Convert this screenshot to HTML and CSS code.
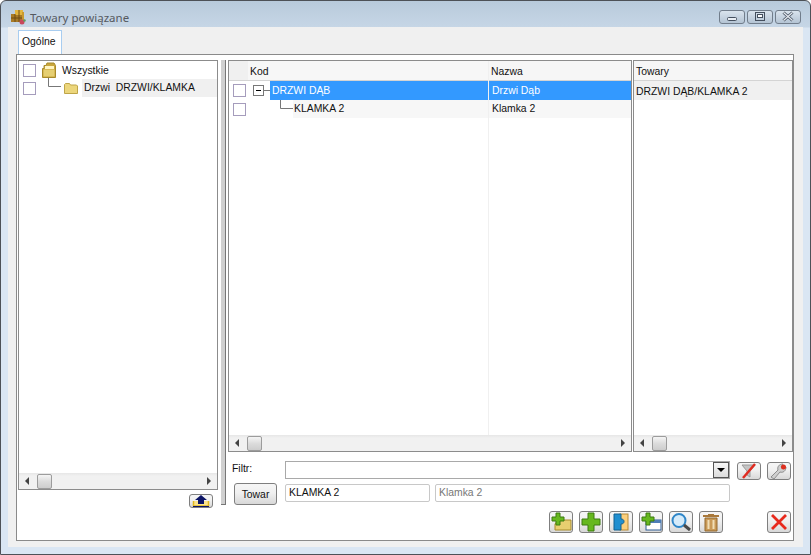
FILE: index.html
```html
<!DOCTYPE html>
<html lang="pl">
<head>
    <meta charset="UTF-8">
    <title>Towary powiązane</title>
    <link rel="stylesheet" href="styles.css">
</head>
<body>
<div class="window">
    <div class="titlebar">
        <svg class="app-icon" width="15" height="15" viewBox="0 0 15 15">
            <rect x="0" y="4" width="11" height="8" fill="#a87a26"/>
            <rect x="4" y="0" width="8" height="5" fill="#e2b640"/>
            <path d="M8 0v5M0 8h11M4 4v8M8 5v7" stroke="#6e4d14"/>
            <rect x="11" y="2" width="2" height="8" fill="#c99a2e"/>
            <circle cx="11" cy="12" r="2.500" fill="#c9485c"/>
            <circle cx="13.500" cy="10.500" r="1.200" fill="#5aa05a"/>
        </svg>
        <span class="title">Towary powiązane</span>
        <div class="wbuttons">
            <div class="wbtn"><svg width="26" height="14" viewBox="0 0 26 14"><rect x="8.500" y="7.500" width="9" height="3" rx="1" fill="#e8edf3" stroke="#444f5e"/></svg></div>
            <div class="wbtn"><svg width="26" height="14" viewBox="0 0 26 14"><rect x="8.500" y="2.500" width="9" height="8" fill="none" stroke="#444f5e"/><rect x="10.500" y="4.500" width="5" height="3" fill="#fff" stroke="#444f5e"/></svg></div>
            <div class="wbtn"><svg width="26" height="14" viewBox="0 0 26 14"><path d="M8.500 2.500l9 8M17.500 2.500l-9 8" stroke="#4a5564" stroke-width="3"/><path d="M8.500 2.500l9 8M17.500 2.500l-9 8" stroke="#e6ebf1" stroke-width="1.200"/></svg></div>
        </div>
    </div>
    <div class="client">
        <div class="tabs"><div class="tab">Ogólne</div></div>
        <div class="panel">
            <div class="left">
                <div class="box tree">
                    <div class="tree-body">
                        <div class="tree-row">
                            <span class="check"></span>
                            <svg class="folder-all" width="15" height="16" viewBox="0 0 15 16"><path d="M.5 6.500h1.500v-3h2l1-2.500h7l1.500 2.500v12H.5z" fill="#c9a63c" stroke="#a88a2a"/><path d="M3 4h9v3H3z" fill="#fff4c0"/><path d="M1.500 7.500h11v7h-11z" fill="#e6cf72"/></svg>
                            <span class="tree-label">Wszystkie</span>
                        </div>
                        <div class="tree-row">
                            <span class="check"></span>
                            <svg class="elbow-left" width="13" height="10" viewBox="0 0 13 10"><path d="M.5 0v8.500h12.500" fill="none" stroke="#777"/></svg>
                            <svg class="folder" width="14" height="13" viewBox="0 0 14 13"><path d="M.5 11.500V2.500l1-1h4l1 1.500h6l1 1v7.500z" fill="#ecd67c" stroke="#bfa548"/></svg>
                            <span class="tree-cur">Drzwi&nbsp; DRZWI/KLAMKA</span>
                        </div>
                    </div>
                    <div class="hscroll">
                        <i class="arrow-l"></i>
                        <span class="thumb"></span>
                        <i class="arrow-r"></i>
                    </div>
                </div>
                <div class="left-foot">
                    <div class="btn btn-up">
                        <svg width="18" height="12" viewBox="0 0 18 12"><path d="M1.500 6v5h15V6" fill="#fbe38a" stroke="#e0b820" stroke-width="1.500"/><path d="M9 0l6 5h-3v4H6V5H3z" fill="#0c1566"/><path d="M1 11.500h16" stroke="#0c1566"/></svg>
                    </div>
                </div>
            </div>
            <div class="splitter"></div>
            <div class="right">
                <div class="grids">
                    <div class="box grid-main">
                        <div class="columns">
                            <div class="col-kod">
                                <div class="head head-kod">Kod</div>
                                <div class="row">
                                    <span class="check"></span>
                                    <span class="expander"></span>
                                    <span class="dash"></span>
                                    <span class="cell-sel">DRZWI DĄB</span>
                                </div>
                                <div class="row row-sub">
                                    <span class="check"></span>
                                    <svg class="elbow" width="13" height="9" viewBox="0 0 13 9"><path d="M.5 0v8.500h12.500" fill="none" stroke="#777"/></svg>
                                    <span class="cell-sub">KLAMKA 2</span>
                                </div>
                            </div>
                            <div class="col-nazwa">
                                <div class="head">Nazwa</div>
                                <div class="row cell-sel cell-nazwa">Drzwi Dąb</div>
                                <div class="row row-sub cell-sub cell-nazwa">Klamka 2</div>
                            </div>
                        </div>
                        <div class="hscroll">
                            <i class="arrow-l"></i>
                            <span class="thumb"></span>
                            <i class="arrow-r"></i>
                        </div>
                    </div>
                    <div class="box grid-side">
                        <div class="columns">
                            <div class="col-towary">
                                <div class="head">Towary</div>
                                <div class="row row-towary">DRZWI DĄB/KLAMKA 2</div>
                            </div>
                        </div>
                        <div class="hscroll">
                            <i class="arrow-l"></i>
                            <span class="thumb"></span>
                            <i class="arrow-r"></i>
                        </div>
                    </div>
                </div>
                <div class="filter-row">
                    <span class="filter-label">Filtr:</span>
                    <div class="combo"><span class="combo-btn"><i></i></span></div>
                    <div class="btn btn-tool">
                        <svg width="20" height="16" viewBox="0 0 20 16"><path d="M3 2h13l-5 6v6l-3-2V8z" fill="#c4c4c4" stroke="#9a9a9a"/><path d="M4 15L16 1" stroke="#e02b20" stroke-width="2.500"/></svg>
                    </div>
                    <div class="btn btn-tool">
                        <svg width="20" height="16" viewBox="0 0 20 16"><path d="M2 14l7-7c-1-3 1-6 5-6l-2 3 2 2 3-2c0 4-3 6-6 5l-6 7z" fill="#cfcfcf" stroke="#8d8d8d"/><circle cx="14.500" cy="4" r="2.500" fill="#de3020"/></svg>
                    </div>
                </div>
                <div class="towar-row">
                    <div class="btn btn-towar">Towar</div>
                    <div class="field field-code">KLAMKA 2</div>
                    <div class="field field-name">Klamka 2</div>
                </div>
                <div class="action-row">
                    <div class="btn btn-act">
                        <svg width="22" height="20" viewBox="0 0 22 20"><path d="M8 8h13v10H5V12z" fill="#e8cf70" stroke="#a88b2c"/><path d="M6 1h4v4h4v4h-4v4H6V9H2V5h4z" fill="#66b81e" stroke="#3c7a10"/></svg>
                    </div>
                    <div class="btn btn-act">
                        <svg width="22" height="20" viewBox="0 0 22 20"><path d="M8 1h6v6h6v6h-6v6H8v-6H2V7h6z" fill="#66b81e" stroke="#3c7a10"/></svg>
                    </div>
                    <div class="btn btn-act">
                        <svg width="22" height="20" viewBox="0 0 22 20"><rect x="10" y="2" width="8" height="16" fill="#fbcf7c" stroke="#b88a34"/><path d="M4 2h7v5c2 0 3 1 3 2.500S13 12 11 12v6H4z" fill="#1f8fd0" stroke="#12608f"/></svg>
                    </div>
                    <div class="btn btn-act">
                        <svg width="22" height="20" viewBox="0 0 22 20"><rect x="6" y="8" width="15" height="10" fill="#fff" stroke="#2f5c94"/><rect x="6" y="8" width="15" height="3" fill="#4f7fb8"/><path d="M6 1h4v4h4v4h-4v4H6V9H2V5h4z" fill="#66b81e" stroke="#3c7a10"/></svg>
                    </div>
                    <div class="btn btn-act">
                        <svg width="22" height="20" viewBox="0 0 22 20"><circle cx="9" cy="8.500" r="6.500" fill="#d5ebfa" stroke="#2f86c8" stroke-width="2"/><path d="M14 13l6 5" stroke="#4a4a4a" stroke-width="3"/></svg>
                    </div>
                    <div class="btn btn-act">
                        <svg width="22" height="20" viewBox="0 0 22 20"><path d="M8 2h6v1h5v2H3V3h5z" fill="#a9783a"/><path d="M5 6h12v13H5z" fill="#c99a58" stroke="#93682e"/><path d="M8.500 8v9M13.500 8v9" stroke="#f1deb6" stroke-width="2"/></svg>
                    </div>
                    <div class="btn btn-act btn-close">
                        <svg width="22" height="20" viewBox="0 0 22 20"><path d="M4 3l14 14M18 3L4 17" stroke="#e8291c" stroke-width="2.800"/></svg>
                    </div>
                </div>
            </div>
        </div>
    </div>
</div>
</body>
</html>
```

FILE: styles.css
```css
html, body {
    margin: 0;
    height: 100%;
    overflow: hidden;
}
body {
    font-family: "Liberation Sans", sans-serif;
    font-size: 10.4px;
    color: #111;
}
.window {
    box-sizing: border-box;
    width: 811px;
    height: 555px;
    display: flex;
    flex-direction: column;
    border: 1px solid #4d5157;
    border-radius: 6px 6px 0 0;
    background: linear-gradient(#b8cadb 0, #c6d6e6 26px, #dae6f3 27px);
}
.titlebar {
    height: 26px;
    flex: none;
    display: flex;
    align-items: center;
    padding-left: 10px;
}
.app-icon {
    margin-top: 6px;
}
.title {
    margin-left: 4px;
    margin-top: 6px;
    font-family: "Noto Sans", sans-serif;
    font-size: 11.5px;
    color: #55595f;
}
.wbuttons {
    margin-left: auto;
    margin-right: 9px;
    margin-top: 6px;
    display: flex;
    gap: 2px;
}
.wbtn {
    box-sizing: border-box;
    width: 26px;
    height: 14px;
    border: 1px solid #717d8b;
    border-radius: 3px;
    background: linear-gradient(#d9e3ed, #b4c4d4);
    overflow: hidden;
}
.wbtn svg {
    display: block;
    margin: -1px 0 0 -1px;
}
.client {
    flex: 1;
    margin: 0 7px 7px;
    background: #f0f0f0;
    display: flex;
    flex-direction: column;
    padding: 3px 9px 6px 8px;
    min-height: 0;
}
.tabs {
    height: 24px;
    flex: none;
    padding-left: 2px;
    position: relative;
    z-index: 1;
}
.tab {
    display: inline-block;
    box-sizing: border-box;
    width: 44px;
    height: 24px;
    line-height: 21px;
    padding-left: 3px;
    background: #fff;
    border: 1px solid #a8cdf0;
    border-bottom: 0;
}
.panel {
    flex: 1;
    min-height: 0;
    background: #fff;
    border: 1px solid #8a8a8a;
    display: flex;
    padding: 5px 0 7px 1px;
}
.box {
    box-sizing: border-box;
    border: 1px solid #8c8c8c;
    display: flex;
    flex-direction: column;
    background: #fff;
}
.left {
    width: 200px;
    flex: none;
    display: flex;
    flex-direction: column;
}
.tree {
    height: 430px;
}
.tree-body {
    flex: 1;
}
.tree-row {
    display: flex;
    align-items: center;
    height: 18px;
    padding-left: 4px;
}
.check {
    box-sizing: border-box;
    flex: none;
    width: 13px;
    height: 13px;
    background: #fff;
    border: 1px solid #a59cbc;
}
.folder-all {
    margin-left: 6px;
}
.tree-label {
    margin-left: 5px;
}
.elbow-left {
    margin: -10px 0 0 12px;
}
.folder {
    margin-left: 3px;
}
.tree-cur {
    flex: 1;
    margin-left: 4px;
    line-height: 18px;
    padding-left: 2px;
    background: #f0f0f0;
}
.hscroll {
    flex: none;
    height: 16px;
    display: flex;
    align-items: center;
    padding: 0 6px;
    background: linear-gradient(#e6e6e6, #f1f1f1 3px);
}
.arrow-l, .arrow-r {
    width: 0;
    height: 0;
    border-top: 4px solid transparent;
    border-bottom: 4px solid transparent;
}
.arrow-l {
    border-right: 4px solid #444;
}
.arrow-r {
    margin-left: auto;
    border-left: 4px solid #444;
}
.thumb {
    box-sizing: border-box;
    width: 15px;
    height: 15px;
    margin-left: 8px;
    border: 1px solid #9c9c9c;
    border-radius: 2px;
    background: linear-gradient(#f5f5f5, #dcdcdc 50%, #cdcdcd);
}
.left-foot {
    display: flex;
    justify-content: flex-end;
    padding: 4px 5px 0 0;
}
.btn {
    box-sizing: border-box;
    flex: none;
    display: flex;
    align-items: center;
    justify-content: center;
    border: 1px solid #7f7f7f;
    border-radius: 3px;
    background: linear-gradient(#f6f6f6, #f0f0f0 45%, #d8d8d8);
}
.btn-up {
    width: 24px;
    height: 14px;
}
.splitter {
    box-sizing: border-box;
    flex: none;
    width: 5px;
    height: 445px;
    margin: 0 2px 0 3px;
    background: #d0d0d0;
    border-right: 1px solid #777;
    border-bottom: 1px solid #777;
}
.right {
    flex: 1;
    min-width: 0;
    display: flex;
    flex-direction: column;
}
.grids {
    display: flex;
    height: 392px;
    flex: none;
    gap: 1px;
}
.grid-main {
    width: 404px;
}
.grid-side {
    width: 160px;
}
.columns {
    flex: 1;
    display: flex;
    min-height: 0;
}
.col-kod {
    box-sizing: border-box;
    width: 260px;
    border-right: 1px solid #f0f0f0;
}
.col-nazwa,
.col-towary {
    flex: 1;
}
.head {
    box-sizing: border-box;
    height: 20px;
    line-height: 21px;
    padding-left: 2px;
    background: #f6f6f6;
    border-bottom: 1px solid #d4d4d4;
}
.head-kod {
    padding-left: 21px;
    background: linear-gradient(90deg, #f0f0f0 19px, #f7f7f7 19px);
}
.row {
    display: flex;
    align-items: center;
    height: 19px;
    padding-left: 4px;
}
.row-sub {
    height: 18px;
}
.col-nazwa .row {
    padding-left: 3px;
}
.expander {
    box-sizing: border-box;
    flex: none;
    width: 11px;
    height: 11px;
    margin-left: 7px;
    border: 1px solid #777;
    background: linear-gradient(#000, #000) center / 5px 1px no-repeat #fff;
}
.dash {
    flex: none;
    width: 6px;
    height: 1px;
    background: #777;
}
.cell-sel {
    flex: 1;
    align-self: stretch;
    line-height: 20px;
    background: #3399ff;
    color: #fff;
    padding-left: 2px;
}
.cell-sub {
    flex: 1;
    align-self: stretch;
    line-height: 18px;
    background: #f7f7f7;
}
.col-kod .cell-sub {
    padding-left: 1px;
}
.elbow {
    flex: none;
    margin: -9px 0 0 34px;
}
.row-towary {
    padding-left: 2px;
    padding-top: 1px;
    box-sizing: border-box;
    background: #f0f0f0;
}
.filter-row {
    display: flex;
    align-items: flex-start;
    height: 18px;
    margin-top: 9px;
}
.filter-label {
    width: 57px;
    flex: none;
    line-height: 15px;
    padding-left: 4px;
    box-sizing: border-box;
}
.combo {
    box-sizing: border-box;
    width: 445px;
    height: 18px;
    flex: none;
    display: flex;
    justify-content: flex-end;
    border: 1px solid #a9a9a9;
}
.combo-btn {
    box-sizing: border-box;
    width: 16px;
    display: flex;
    align-items: center;
    justify-content: center;
    border: 1px solid #555;
    background: linear-gradient(#f6f6f6, #dcdcdc);
}
.combo-btn i {
    width: 0;
    height: 0;
    border-left: 4px solid transparent;
    border-right: 4px solid transparent;
    border-top: 4px solid #000;
}
.btn-tool {
    width: 24px;
    height: 18px;
    margin: 1px 0 0 7px;
}
.btn-tool + .btn-tool {
    margin-left: 6px;
}
.towar-row {
    display: flex;
    align-items: flex-start;
    height: 22px;
    margin-top: 4px;
    padding-left: 6px;
}
.btn-towar {
    width: 43px;
    height: 22px;
    margin-right: 8px;
}
.field {
    box-sizing: border-box;
    height: 18px;
    margin-top: 1px;
    line-height: 16px;
    padding-left: 3px;
    border: 1px solid #c8c8c8;
    border-radius: 2px;
}
.field-code {
    width: 145px;
}
.field-name {
    width: 295px;
    margin-left: 5px;
    color: #777;
}
.action-row {
    display: flex;
    height: 22px;
    margin-top: 6px;
    padding-left: 321px;
    gap: 6px;
}
.btn-act {
    width: 24px;
    height: 22px;
}
.btn-close {
    margin-left: 38px;
}
```
